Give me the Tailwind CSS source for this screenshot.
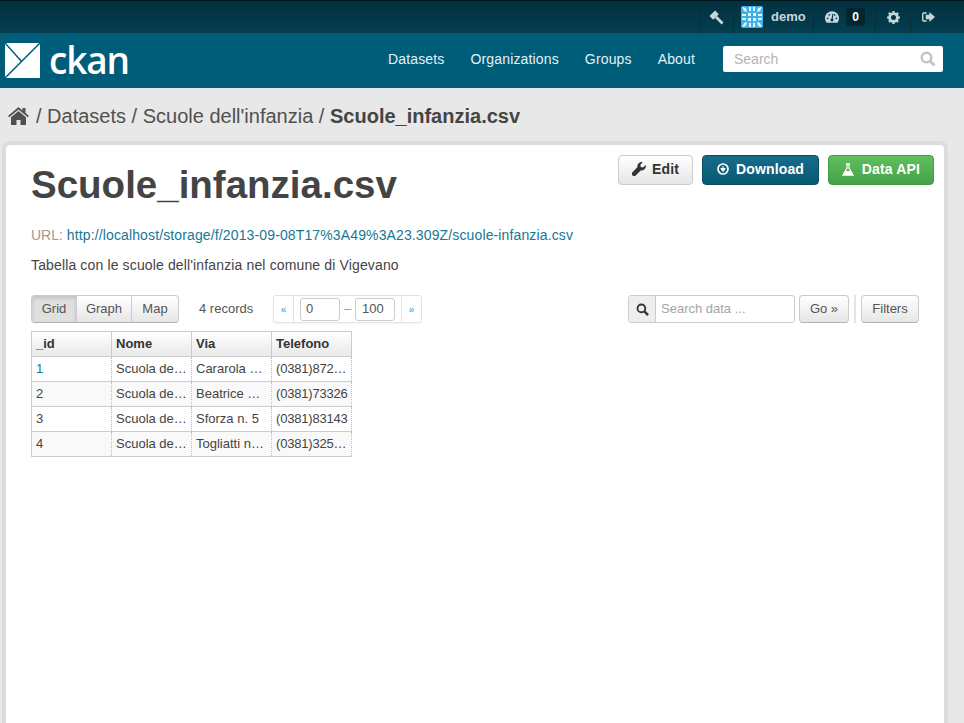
<!DOCTYPE html>
<html lang="en">
<head>
    <meta charset="UTF-8">
    <title>Scuole_infanzia.csv</title>
    <script src="https://cdn.jsdelivr.net/npm/@tailwindcss/browser@4"></script>
</head>
<body class="bg-[#e8e8e8] h-[723px] overflow-hidden font-['Liberation_Sans',sans-serif] text-[#444]">
    <!-- Account bar -->
    <div class="h-[33px] bg-gradient-to-b from-[#02303f] to-[#043f50] border-t border-[#01181f] flex justify-end pr-[18px] text-[#c6d7db] font-bold text-[13px]">
        <div class="flex items-stretch border-l border-[#02303d]">
            <a class="w-[34px] flex items-center justify-center border-r border-[#02303d]">
                <svg class="w-[15px] h-[15px]" viewBox="0 0 16 16" fill="#c6d7db"><path d="M.5 6.500 6.500.5l4 4-6 6z"/><path d="M7.500 7.500 14.500 14.500" stroke="#c6d7db" stroke-width="3"/></svg>
            </a>
            <a class="w-[80px] flex items-center pl-[7px] gap-2 border-r border-[#02303d]">
                <svg class="w-[22px] h-[22px] rounded-[2px]" viewBox="0 0 22 22"><rect width="22" height="22" fill="#3fb0ea"/><path d="M1 1l4 1 1 4-3-1zM21 1l-4 1-1 4 3-1zM1 21l4-1 1-4-3 1zM21 21l-4-1-1-4 3 1zM8 1h2v4H8zM12 1h2v4h-2zM8 17h2v4H8zM12 17h2v4h-2zM1 8h4v2H1zM1 12h4v2H1zM17 8h4v2h-4zM17 12h4v2h-4zM7 7h3v3H7zM12 7h3v3h-3zM7 12h3v3H7zM12 12h3v3h-3z" fill="#e6f6fd"/></svg>
                <span>demo</span>
            </a>
            <a class="w-[62px] flex items-center pl-[11px] gap-[7px] border-r border-[#02303d]">
                <svg class="w-[14px] h-[12px]" viewBox="0 0 16 13" fill="#c6d7db"><path d="M8 0a8 8 0 0 0-8 8c0 2 .7 3.700 1.800 5h12.400A8 8 0 0 0 16 8a8 8 0 0 0-8-8z"/><g fill="#03394a"><circle cx="3" cy="8" r="1"/><circle cx="5" cy="4" r="1"/><circle cx="13" cy="8" r="1"/><circle cx="11" cy="4" r="1"/><circle cx="8" cy="10" r="1.700"/></g><path d="M8 10 L9 3" stroke="#03394a" stroke-width="1.200"/></svg>
                <span class="w-[19px] h-[18px] rounded-[3px] bg-[#02252f] text-white text-[12px] flex items-center justify-center">0</span>
            </a>
            <a class="w-[35px] flex items-center justify-center border-r border-[#02303d]">
                <svg class="w-[13px] h-[13px]" viewBox="0 0 14 14"><circle cx="7" cy="7" r="4.200" fill="none" stroke="#c6d7db" stroke-width="3"/><path d="M7 0v14M0 7h14M2 2l10 10M12 2L2 12" stroke="#c6d7db" stroke-width="2.400" stroke-dasharray="2.500 9"/></svg>
            </a>
            <a class="w-[35px] flex items-center justify-center">
                <svg class="w-[13px] h-[12px]" viewBox="0 0 14 12" fill="#c6d7db"><path d="M5 1H2a2 2 0 0 0-2 2v6a2 2 0 0 0 2 2h3V9.500H2.500a1 1 0 0 1-1-1v-5a1 1 0 0 1 1-1H5z"/><path d="M8 .5 14 6l-6 5.500V8.500H4v-5h4z"/></svg>
            </a>
        </div>
    </div>

    <!-- Masthead -->
    <div class="h-[55px] bg-[#005d7a] flex items-center pl-[5px] pr-[21px] text-white">
        <svg class="w-[35px] h-[35px] mt-[-1px]" viewBox="0 0 35 35"><rect width="35" height="35" fill="#fff"/><path d="M0 0 L17 19 M35 0 L0 35" stroke="#005d7a" stroke-width="1.500" fill="none"/></svg>
        <span class="ml-[9px] text-[37px] leading-none font-['Open_Sans',sans-serif] font-semibold mt-[-2px] tracking-[-1.2px]">ckan</span>
        <nav class="ml-auto mb-[2px] flex items-center text-[14px] text-[#e6f0f3] gap-[26px] tracking-[0.15px]">
            <a>Datasets</a>
            <a>Organizations</a>
            <a>Groups</a>
            <a>About</a>
        </nav>
        <div class="ml-[28px] w-[220px] h-[26px] mb-[3px] bg-white rounded-[2px] flex items-center justify-between pl-[11px] pr-[7px] text-[14px] text-[#b3b3b3]">
            <span>Search</span>
            <svg class="w-[16px] h-[16px]" viewBox="0 0 16 16" fill="none" stroke="#c4c4c4"><circle cx="6.500" cy="6.500" r="4.800" stroke-width="2.400"/><path d="M10 10l4.500 4.500" stroke-width="3"/></svg>
        </div>
    </div>

    <!-- Breadcrumb -->
    <div class="h-[57px] pb-[2px] flex items-center pl-[8px] text-[20px] text-[#505050]">
        <svg class="w-[21px] h-[18px] mr-[7px]" viewBox="0 0 21 18" fill="#505050"><path d="M10.500 0 L14.500 3.500V1h3v5l3.500 3-1.200 1.300L10.500 2.500 1.200 10.300 0 9z"/><path d="M10.500 4 L18 10.200V18h-5.500v-5h-4v5H3v-7.800z"/></svg>
        <span>/ Datasets / Scuole dell'infanzia / <b class="text-[#444]">Scuole_infanzia.csv</b></span>
    </div>

    <!-- Resource card -->
    <div class="ml-[6px] w-[938px] h-[600px] bg-white rounded-t-[4px] shadow-[0_0_0_4px_#dcdcdc] px-[25px]">
        <div class="flex justify-between">
            <h1 class="text-[38.5px] font-bold leading-[48px] mt-[16px] text-[#444]">Scuole_infanzia.csv</h1>
            <div class="flex gap-[9px] mt-[10px] mr-[-15px] text-[14px] font-bold tracking-[0.15px]">
                <a class="w-[75px] h-[30px] pb-[2px] rounded-[4px] border border-[#ccc] bg-gradient-to-b from-white to-[#e6e6e6] flex items-center justify-center gap-[6px] text-[#333]">
                    <svg class="w-[14px] h-[14px]" viewBox="0 0 14 14" fill="#333"><path d="M13.500 3 11 5.500 8.700 5 8.300 2.800 10.800.4A4 4 0 0 0 5.500 5L.5 10.200a2.200 2.200 0 0 0 3.200 3.200L9 8.300A4 4 0 0 0 13.500 3z"/></svg>
                    <span>Edit</span>
                </a>
                <a class="w-[117px] h-[30px] pb-[2px] rounded-[4px] border border-[#0b4c63] bg-gradient-to-b from-[#186b8a] to-[#055a73] flex items-center justify-center gap-[7px] text-white">
                    <svg class="w-[12px] h-[12px]" viewBox="0 0 12 12"><circle cx="6" cy="6" r="5" fill="none" stroke="#fff" stroke-width="1.700"/><path d="M6 3v3M3.800 5.500 6 8.500l2.200-3z" stroke="#fff" fill="#fff"/></svg>
                    <span>Download</span>
                </a>
                <a class="w-[106px] h-[30px] pb-[2px] rounded-[4px] border border-[#469c46] bg-gradient-to-b from-[#60bf60] to-[#46a146] flex items-center justify-center gap-[8px] text-white">
                    <svg class="w-[12px] h-[13px]" viewBox="0 0 12 13"><path d="M4 1h4M5 1v4L1 12h10L7 5V1" fill="none" stroke="#fff" stroke-width="1.300"/><path d="M3.500 8h5l2 4h-9z" fill="#fff"/></svg>
                    <span>Data API</span>
                </a>
            </div>
        </div>
        <p class="mt-[16px] text-[14px] leading-5 text-[#a39a8c]">URL: <a class="text-[#187794] tracking-[0.13px]">http://localhost/storage/f/2013-09-08T17%3A49%3A23.309Z/scuole-infanzia.csv</a></p>
        <p class="mt-[10px] text-[14px] leading-5 text-[#444] tracking-[0.14px]">Tabella con le scuole dell'infanzia nel comune di Vigevano</p>

        <!-- Toolbar -->
        <div class="mt-[20px] flex items-center h-[28px] text-[13px] text-[#555] w-[888px]">
            <div class="flex h-[28px] w-[148px] rounded-[4px] border border-[#ccc] border-b-[#b3b3b3] bg-gradient-to-b from-white to-[#e6e6e6] overflow-hidden">
                <a class="w-[45px] flex items-center justify-center bg-[#e0e0e0] shadow-[inset_0_2px_4px_rgba(0,0,0,0.15)] border-r border-[#ccc]">Grid</a>
                <a class="w-[55px] flex items-center justify-center border-r border-[#ccc]">Graph</a>
                <a class="flex-1 flex items-center justify-center">Map</a>
            </div>
            <span class="ml-[20px] w-[74px] text-[13px]">4 records</span>
            <div class="flex items-center h-[28px] w-[149px] rounded-[3px] border border-[#e3e3e3] shadow-[0_1px_2px_rgba(0,0,0,0.05)] text-[#555]">
                <span class="w-[20px] h-full flex items-center justify-center text-[10px] text-[#2a9fd6] border-r border-[#e3e3e3]">«</span>
                <span class="ml-[6px] w-[40px] h-[23px] border border-[#ccc] rounded-[3px] pl-[5px] leading-[20px]">0</span>
                <span class="w-[15px] text-center text-[#999]">–</span>
                <span class="w-[40px] h-[23px] border border-[#ccc] rounded-[3px] pl-[6px] leading-[20px]">100</span>
                <span class="ml-[6px] flex-1 h-full flex items-center justify-center text-[10px] text-[#2a9fd6] border-l border-[#e3e3e3]">»</span>
            </div>
            <div class="ml-auto flex h-[28px] w-[167px] rounded-[3px] border border-[#ccc]">
                <span class="w-[27px] flex items-center justify-center bg-[#eee] border-r border-[#ccc]">
                    <svg class="w-[13px] h-[13px]" viewBox="0 0 14 14" fill="none" stroke="#333"><circle cx="5.800" cy="5.800" r="4.200" stroke-width="2"/><path d="M9 9l4 4" stroke-width="2.600"/></svg>
                </span>
                <span class="pl-[5px] leading-[26px] text-[#a5a5a5]">Search data ...</span>
            </div>
            <a class="ml-[4px] w-[50px] h-[28px] rounded-[4px] border border-[#ccc] border-b-[#b3b3b3] bg-gradient-to-b from-white to-[#e6e6e6] flex items-center justify-center">Go »</a>
            <span class="ml-[5px] w-[2px] h-[28px] bg-[#e5e5e5]"></span>
            <a class="ml-[5px] w-[58px] h-[28px] rounded-[4px] border border-[#ccc] border-b-[#b3b3b3] bg-gradient-to-b from-white to-[#e6e6e6] flex items-center justify-center">Filters</a>
        </div>

        <!-- Data grid -->
        <table class="mt-[8px] table-fixed w-[321px] border-collapse text-[13px] text-[#444]">
            <colgroup><col class="w-[80px]"><col class="w-[80px]"><col class="w-[80px]"><col class="w-[80px]"></colgroup>
            <thead>
                <tr class="h-[25px] bg-gradient-to-b from-white to-[#e8e8e8] font-bold text-[#333]">
                    <th class="border border-[#ccc] text-left font-bold px-[4px]">_id</th>
                    <th class="border border-[#ccc] text-left font-bold px-[4px]">Nome</th>
                    <th class="border border-[#ccc] text-left font-bold px-[4px]">Via</th>
                    <th class="border border-[#ccc] text-left font-bold px-[4px]">Telefono</th>
                </tr>
            </thead>
            <tbody>
                <tr class="h-[25px]">
                    <td class="border-b border-l border-[#ccc] px-[4px] text-[#187794]">1</td>
                    <td class="border-b border-l border-l-[#bbb] border-dotted [border-bottom-style:solid] border-b-[#ccc] px-[4px] truncate">Scuola dell'infanzia</td>
                    <td class="border-b border-l border-l-[#bbb] border-dotted [border-bottom-style:solid] border-b-[#ccc] px-[4px] truncate">Cararola n. 12</td>
                    <td class="border-b border-x border-x-[#bbb] border-dotted [border-bottom-style:solid] border-b-[#ccc] pl-[4px] pr-[2px] truncate tracking-[-0.2px]">(0381)872551</td>
                </tr>
                <tr class="h-[25px] bg-[#f9f9f9]">
                    <td class="border-b border-l border-[#ccc] px-[4px]">2</td>
                    <td class="border-b border-l border-l-[#bbb] border-dotted [border-bottom-style:solid] border-b-[#ccc] px-[4px] truncate">Scuola dell'infanzia</td>
                    <td class="border-b border-l border-l-[#bbb] border-dotted [border-bottom-style:solid] border-b-[#ccc] px-[4px] truncate">Beatrice d'Este 1</td>
                    <td class="border-b border-x border-x-[#bbb] border-dotted [border-bottom-style:solid] border-b-[#ccc] pl-[4px] pr-[2px] truncate tracking-[-0.2px]">(0381)73326</td>
                </tr>
                <tr class="h-[25px]">
                    <td class="border-b border-l border-[#ccc] px-[4px]">3</td>
                    <td class="border-b border-l border-l-[#bbb] border-dotted [border-bottom-style:solid] border-b-[#ccc] px-[4px] truncate">Scuola dell'infanzia</td>
                    <td class="border-b border-l border-l-[#bbb] border-dotted [border-bottom-style:solid] border-b-[#ccc] px-[4px] truncate">Sforza n. 5</td>
                    <td class="border-b border-x border-x-[#bbb] border-dotted [border-bottom-style:solid] border-b-[#ccc] pl-[4px] pr-[2px] truncate tracking-[-0.2px]">(0381)83143</td>
                </tr>
                <tr class="h-[25px] bg-[#f9f9f9]">
                    <td class="border-b border-l border-[#ccc] px-[4px]">4</td>
                    <td class="border-b border-l border-l-[#bbb] border-dotted [border-bottom-style:solid] border-b-[#ccc] px-[4px] truncate">Scuola dell'infanzia</td>
                    <td class="border-b border-l border-l-[#bbb] border-dotted [border-bottom-style:solid] border-b-[#ccc] px-[4px] truncate">Togliatti n. 20</td>
                    <td class="border-b border-x border-x-[#bbb] border-dotted [border-bottom-style:solid] border-b-[#ccc] pl-[4px] pr-[2px] truncate tracking-[-0.2px]">(0381)325512</td>
                </tr>
            </tbody>
        </table>
    </div>
</body>
</html>
